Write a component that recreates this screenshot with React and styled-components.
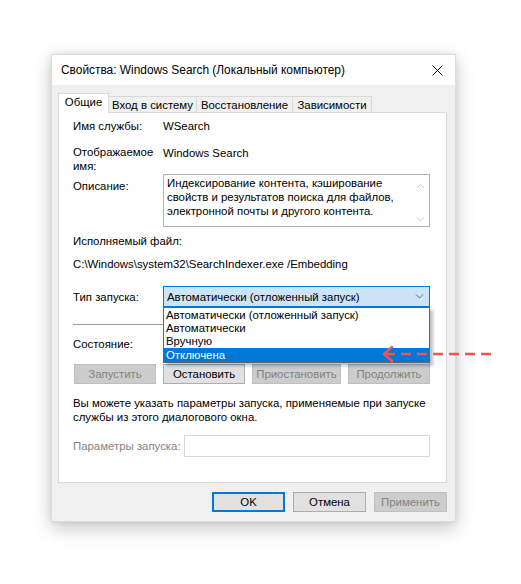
import React from "react";
import styled, { createGlobalStyle } from "styled-components";

const GlobalStyle = createGlobalStyle`
  html, body {
    margin: 0;
    padding: 0;
    background: #ffffff;
  }
  body {
    font-family: "Liberation Sans", Arial, sans-serif;
    font-size: 11.4px;
    color: #000;
  }
`;

const Page = styled.div`
  position: relative;
  width: 521px;
  height: 584px;
  padding: 54px 0 0 51px;
  box-sizing: border-box;
  background: #fff;
`;

const Window = styled.div`
  width: 405px;
  height: 468px;
  background: #f0f0f0;
  border: 1px solid #dcdcdc;
  box-sizing: border-box;
  display: flex;
  flex-direction: column;
  box-shadow: 0 6px 18px rgba(0, 0, 0, 0.22), 0 0 6px rgba(0, 0, 0, 0.08);
`;

const TitleBar = styled.div`
  height: 30px;
  background: #fff;
  display: flex;
  align-items: center;
  justify-content: space-between;
  padding: 0 10px 0 9px;
  font-size: 11.9px;
`;

const CloseIcon = styled.svg`
  width: 11px;
  height: 11px;
  margin-right: 2px;
`;

const Body = styled.div`
  flex: 1;
  display: flex;
  flex-direction: column;
  padding: 8px 8px 0 6px;
`;

const TabStrip = styled.div`
  display: flex;
  align-items: flex-end;
  height: 20px;
  position: relative;
  z-index: 1;
  margin-bottom: -1px;
`;

const Tab = styled.div`
  height: ${(p) => (p.$active ? "20px" : "17px")};
  width: ${(p) => p.$w}px;
  box-sizing: border-box;
  border-top: 1px solid #d9d9d9;
  border-right: 1px solid #d9d9d9;
  border-left: ${(p) => (p.$first ? "1px solid #d9d9d9" : "none")};
  border-bottom: ${(p) => (p.$active ? "none" : "1px solid #d9d9d9")};
  background: ${(p) => (p.$active ? "#fff" : "#f0f0f0")};
  display: flex;
  align-items: center;
  justify-content: center;
  padding-bottom: ${(p) => (p.$active ? "3px" : "0")};
  white-space: nowrap;
`;

const Panel = styled.div`
  position: relative;
  height: 371px;
  box-sizing: border-box;
  background: #fff;
  border: 1px solid #d9d9d9;
  padding: 6px 16px 0 14px;
  display: flex;
  flex-direction: column;
`;

const Row = styled.div`
  display: grid;
  grid-template-columns: 90px 1fr;
  align-items: ${(p) => p.$valign || "start"};
  margin-top: ${(p) => p.$mt || 0}px;
  line-height: 14px;
`;

const Label = styled.div`
  padding-top: ${(p) => p.$pt || 0}px;
  color: ${(p) => (p.$muted ? "#838383" : "#000")};
  white-space: nowrap;
`;

const Text = styled.div`
  line-height: 14px;
  margin-top: ${(p) => p.$mt || 0}px;
  white-space: nowrap;
`;

const Description = styled.div`
  position: relative;
  height: 53px;
  border: 1px solid #b4b4b4;
  box-sizing: border-box;
  padding: 1px 20px 0 3px;
  line-height: 14px;
  white-space: nowrap;
`;

const ScrollArrows = styled.div`
  position: absolute;
  right: 0;
  top: 0;
  bottom: 0;
  width: 17px;
  display: flex;
  flex-direction: column;
  justify-content: space-between;
  align-items: center;
  padding: 8px 0 4px;
  box-sizing: border-box;
`;

const Combo = styled.div`
  position: relative;
  height: 21px;
  box-sizing: border-box;
  border: 1px solid #0078d7;
  background: #cce4f7;
  display: flex;
  align-items: center;
  justify-content: space-between;
  padding: 0 5px 0 3px;
`;

const DropList = styled.div`
  position: absolute;
  left: -1px;
  right: -1px;
  top: 20px;
  background: #fff;
  border: 1px solid #646464;
  padding-top: 1px;
  box-shadow: 3px 3px 3px rgba(0, 0, 0, 0.25);
  z-index: 5;
`;

const DropItem = styled.div`
  height: ${(p) => (p.$selected ? 14 : 13)}px;
  line-height: ${(p) => (p.$selected ? 14 : 13)}px;
  padding-left: 2px;
  background: ${(p) => (p.$selected ? "#0078d7" : "transparent")};
  color: ${(p) => (p.$selected ? "#fff" : "#000")};
`;

const Separator = styled.div`
  height: 1px;
  background: #a0a0a0;
  margin-top: 17px;
`;

const ButtonRow = styled.div`
  display: flex;
  justify-content: space-between;
  margin-top: 13px;
  width: 356px;
  margin-left: 1px;
`;

const Button = styled.div`
  width: ${(p) => p.$w}px;
  height: 20px;
  box-sizing: border-box;
  display: flex;
  align-items: center;
  justify-content: center;
  background: ${(p) => (p.$disabled ? "#cccccc" : "#e1e1e1")};
  color: ${(p) => (p.$disabled ? "#838383" : "#000")};
  border: ${(p) =>
    p.$primary ? "2px solid #0078d7" : p.$disabled ? "1px solid #bfbfbf" : "1px solid #adadad"};
`;

const Note = styled.div`
  margin-top: 12px;
  line-height: 14px;
  white-space: nowrap;
`;

const ParamRow = styled.div`
  display: flex;
  align-items: center;
  margin-top: 11px;
`;

const ParamInput = styled.div`
  margin-left: auto;
  width: 246px;
  height: 22px;
  box-sizing: border-box;
  border: 1px solid #d9d9d9;
  background: #fff;
`;

const Footer = styled.div`
  display: flex;
  justify-content: flex-end;
  gap: 8px;
  padding: 9px 0 0;
`;

const Pointer = styled.svg`
  position: absolute;
  left: 380px;
  top: 345px;
  width: 120px;
  height: 18px;
  z-index: 10;
`;

const Chevron = ({ up, color = "#606060", size = 9 }) => (
  <svg width={size} height={size * 0.6} viewBox="0 0 10 6">
    <path
      d={up ? "M1 5.5 L5 1.5 L9 5.5" : "M1 0.5 L5 4.5 L9 0.5"}
      fill="none"
      stroke={color}
      strokeWidth="1"
    />
  </svg>
);

const startupTypes = [
  "Автоматически (отложенный запуск)",
  "Автоматически",
  "Вручную",
  "Отключена",
];

export default function App() {
  return (
    <Page>
      <GlobalStyle />
      <Window>
        <TitleBar>
          <span>Свойства: Windows Search (Локальный компьютер)</span>
          <CloseIcon viewBox="0 0 11 11">
            <path d="M0.5 0.5 L10.5 10.5 M10.5 0.5 L0.5 10.5" stroke="#000" strokeWidth="1" />
          </CloseIcon>
        </TitleBar>
        <Body>
          <TabStrip>
            <Tab $active $first $w={51}>Общие</Tab>
            <Tab $w={88}>Вход в систему</Tab>
            <Tab $w={96}>Восстановление</Tab>
            <Tab $w={79}>Зависимости</Tab>
          </TabStrip>
          <Panel>
            <Row>
              <Label>Имя службы:</Label>
              <Text>WSearch</Text>
            </Row>
            <Row $mt={12}>
              <Label>
                Отображаемое
                <br />
                имя:
              </Label>
              <Text $mt={1}>Windows Search</Text>
            </Row>
            <Row $mt={1}>
              <Label $pt={5}>Описание:</Label>
              <Description>
                Индексирование контента, кэширование
                <br />
                свойств и результатов поиска для файлов,
                <br />
                электронной почты и другого контента.
                <ScrollArrows>
                  <Chevron up color="#c2c2c2" />
                  <Chevron color="#c2c2c2" />
                </ScrollArrows>
              </Description>
            </Row>
            <Text $mt={7}>Исполняемый файл:</Text>
            <Text $mt={9}>C:\Windows\system32\SearchIndexer.exe /Embedding</Text>
            <Row $mt={15} $valign="center">
              <Label>Тип запуска:</Label>
              <Combo>
                <span>{startupTypes[0]}</span>
                <Chevron />
                <DropList>
                  {startupTypes.map((t, i) => (
                    <DropItem key={t} $selected={i === 3}>
                      {t}
                    </DropItem>
                  ))}
                </DropList>
              </Combo>
            </Row>
            <Separator />
            <Text $mt={12}>Состояние:</Text>
            <ButtonRow>
              <Button $disabled $w={82}>Запустить</Button>
              <Button $w={82}>Остановить</Button>
              <Button $disabled $w={89}>Приостановить</Button>
              <Button $disabled $w={82}>Продолжить</Button>
            </ButtonRow>
            <Note>
              Вы можете указать параметры запуска, применяемые при запуске
              <br />
              службы из этого диалогового окна.
            </Note>
            <ParamRow>
              <Label $muted>Параметры запуска:</Label>
              <ParamInput />
            </ParamRow>
          </Panel>
          <Footer>
            <Button $primary $w={73}>OK</Button>
            <Button $w={73}>Отмена</Button>
            <Button $disabled $w={73}>Применить</Button>
          </Footer>
        </Body>
      </Window>
      <Pointer viewBox="0 0 120 18">
        <path d="M12 2 L4 9 L12 16" fill="none" stroke="#f05454" strokeWidth="2.5" strokeLinecap="round" strokeLinejoin="round" />
        <path d="M5 9 H115" stroke="#f05454" strokeWidth="2.5" strokeDasharray="10 6" />
      </Pointer>
    </Page>
  );
}
